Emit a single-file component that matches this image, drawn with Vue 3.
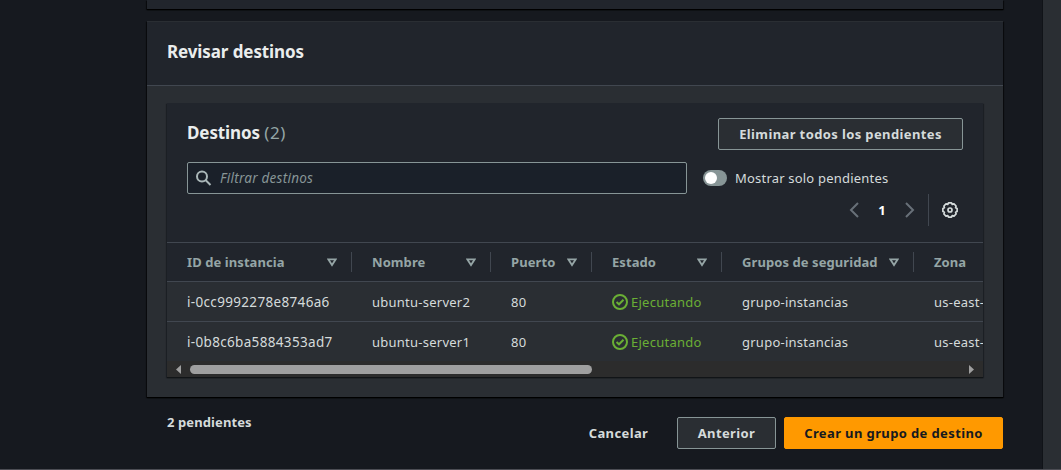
<script setup>
const columns = ['ID de instancia', 'Nombre', 'Puerto', 'Estado', 'Grupos de seguridad', 'Zona']
const rows = [
  { id: 'i-0cc9992278e8746a6', name: 'ubuntu-server2' },
  { id: 'i-0b8c6ba5884353ad7', name: 'ubuntu-server1' },
]
</script>

<template>
  <div class="page">
    <main class="content">
      <section class="card previous"></section>
      <section class="card review">
        <header class="card-header"><h2>Revisar destinos</h2></header>
        <div class="card-body">
          <div class="targets">
            <div class="tools">
              <div class="title-row">
                <h3><span class="h3-text">Destinos</span> <span class="count">(2)</span></h3>
                <button class="btn remove"><span>Eliminar todos los pendientes</span></button>
              </div>
              <div class="filter-row">
                <label class="search">
                  <svg width="16" height="16" viewBox="0 0 16 16" fill="none" stroke="currentColor" stroke-width="2"><circle cx="6" cy="6.5" r="5" /><path d="M9.500 10l5 5" /></svg>
                  <span class="placeholder">Filtrar destinos</span>
                </label>
                <div class="toggle"><i></i></div>
                <span class="toggle-label">Mostrar solo pendientes</span>
              </div>
              <div class="pager">
                <svg class="arrow" width="16" height="16" viewBox="0 0 16 16" fill="none" stroke="currentColor" stroke-width="2"><path d="M12 1L5 8l7 7" /></svg>
                <b>1</b>
                <svg class="arrow" width="16" height="16" viewBox="0 0 16 16" fill="none" stroke="currentColor" stroke-width="2"><path d="M4 1l7 7-7 7" /></svg>
                <span class="settings">
                  <svg width="16" height="16" viewBox="0 0 16 16" fill="none" stroke="currentColor" stroke-width="1.700" stroke-linejoin="round"><path d="M6.500 .9h3l.7 1.500 1.800-.5 2.100 2.100-.5 1.800 1.500.7v3l-1.500.7.5 1.800-2.100 2.100-1.800-.5-.7 1.500h-3l-.7-1.500-1.800.5-2.100-2.100.5-1.800L.9 9.500v-3l1.500-.7-.5-1.800L4 1.900l1.800.5z" /><circle cx="8" cy="8" r="2" /></svg>
                </span>
              </div>
            </div>
            <div class="grid head">
              <div v-for="(c, i) in columns" :key="c" class="th">
                <span>{{ c }}</span>
                <svg v-if="i < 5" width="10" height="9" viewBox="0 0 10 9" fill="none" stroke="currentColor" stroke-width="1.800"><path d="M1.400 1.400h7.200L5 7z" /></svg>
              </div>
            </div>
            <div v-for="r in rows" :key="r.id" class="grid row">
              <div><span class="c-id">{{ r.id }}</span></div>
              <div><span>{{ r.name }}</span></div>
              <div><span>80</span></div>
              <div class="status">
                <svg width="16" height="16" viewBox="0 0 16 16" fill="none" stroke="currentColor" stroke-width="2"><circle cx="8" cy="8" r="7" /><path d="M4.500 8l2.500 2.300L11.500 5.800" /></svg>
                <span>Ejecutando</span>
              </div>
              <div><span>grupo-instancias</span></div>
              <div><span>us-east-</span></div>
            </div>
            <div class="scrollbar">
              <svg width="5" height="9" viewBox="0 0 5 9"><path d="M5 0v9L0 4.500z" fill="#9f9f9f" /></svg>
              <i class="thumb"></i>
              <svg class="right" width="5" height="9" viewBox="0 0 5 9"><path d="M0 0v9l5-4.500z" fill="#9f9f9f" /></svg>
            </div>
          </div>
        </div>
      </section>
      <footer class="actions">
        <b class="pending"><span>2 pendientes</span></b>
        <button class="btn link"><span>Cancelar</span></button>
        <button class="btn prev"><span>Anterior</span></button>
        <button class="btn primary"><span>Crear un grupo de destino</span></button>
      </footer>
    </main>
    <aside class="rail"></aside>
  </div>
</template>

<style>
body { background: #16191f; overflow: hidden; }
</style>

<style scoped>
* { box-sizing: border-box; }
.page {
  height: 470px; display: flex; justify-content: space-between; overflow: hidden;
  background: #16191f; color: #d5dbdb; border-bottom: 1px solid #4c4d54;
  font: 14px/20px "Noto Sans", "Open Sans", sans-serif; white-space: nowrap;
}
.content { width: 856px; margin-left: 147px; }
.rail { width: 19px; background: #2a2e33; border-left: 1px solid #101318; }
.card { background: #2a2e33; box-shadow: 0 1px 1px #000, 1px 1px 1px #0007, -1px 1px 1px #0007; }
.previous { height: 9px; background: #21252c; }
.review { margin-top: 12px; height: 376px; border-top: 1px solid #2a2e33; }
.card-header { height: 64px; padding: 19px 20px 0; background: #21252c; border-bottom: 1px solid #414750; }
h2, h3 { margin: 0; font-size: 17px; line-height: 22px; font-weight: 700; color: #eaeded; letter-spacing: -.1px; }
.count { font-weight: 400; color: #95a5a6; letter-spacing: .5px; }
.card-body { padding: 17px 20px 20px; }
.targets { height: 274px; background: #2a2e33; overflow: hidden; box-shadow: 0 1px 1px #111417, 1px 1px 1px #16191f88, -1px 1px 1px #16191f88; }
.tools { height: 139px; padding: 15px 20px 0; background: #21252c; }
.title-row { display: flex; justify-content: space-between; height: 44px; }
h3 { padding-top: 4px; }
.btn {
  height: 32px; padding: 0; border: 1px solid #879596; border-radius: 2px; background: #2a2e33;
  color: #d5dbdb; font: 700 13px/20px "Noto Sans", sans-serif; letter-spacing: .38px;
}
.remove { width: 245px; }
.filter-row { display: flex; align-items: center; height: 32px; }
.search {
  width: 500px; height: 32px; padding-left: 8px; display: flex; align-items: center; gap: 8px;
  border: 1px solid #879596; border-radius: 2px; background: #1a2029; color: #aab7b8;
}
.placeholder { font-style: italic; color: #879596; font-size: 13.5px; letter-spacing: .25px; }
.toggle { width: 24px; height: 16px; margin: 0 8px 0 16px; padding: 2px; border-radius: 8px; background: #879596; }
.toggle i { display: block; width: 12px; height: 12px; border-radius: 50%; background: #fff; }
.toggle-label { font-size: 13px; letter-spacing: .2px; }
.pager { height: 32px; display: flex; align-items: center; justify-content: flex-end; color: #fff; padding-right: 5px; }
.pager b { width: 40px; text-align: center; font-size: 13px; }
.arrow { color: #687078; }
.settings { height: 32px; margin-left: 10px; padding-left: 13px; border-left: 1px solid #414750; color: #d5dbdb; display: flex; align-items: center; }
.grid { display: grid; grid-template-columns: 185px 139px 101px 130px 192px 180px; align-items: center; }
.grid > div { padding-left: 20px; display: flex; align-items: center; }
.head { height: 40px; background: #21252c; border: solid #414750; border-width: 1px 0; color: #95a5a6; font-weight: 700; font-size: 13px; letter-spacing: .08px; }
.head .th { height: 20px; justify-content: space-between; padding-right: 14px; border-right: 1px solid #414750; }
.row { height: 40px; font-size: 13px; letter-spacing: .25px; border-bottom: 1px solid #414750; }
.row:nth-last-child(2) { height: 39px; border-bottom: 0; }
.c-id { font-size: 13.5px; letter-spacing: .33px; }
.status { color: #6aaf35; gap: 3px; }
.scrollbar { height: 16px; display: flex; align-items: center; padding: 0 9px; background: #2c2c2c; }
.thumb { width: 402px; height: 9px; margin-left: 9px; border-radius: 5px; background: #9f9f9f; }
.right { margin-left: auto; }
.actions { display: flex; padding-top: 20px; }
.pending { flex: 1; padding-left: 20px; margin-top: -5px; font-size: 13px; letter-spacing: .1px; }
.link { width: 101px; border-color: transparent; background: none; }
.prev { width: 99px; margin: 0 8px; }
.primary { width: 219px; background: #ff9900; border-color: #ff9900; color: #16191f; }
</style>
